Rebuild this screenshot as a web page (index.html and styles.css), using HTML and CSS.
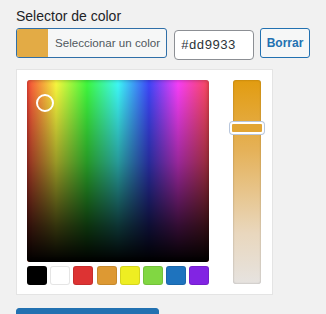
FILE: index.html
```html
<!DOCTYPE html>
<html lang="es">
<head>
  <meta charset="UTF-8">
  <title>Selector de color</title>
  <link rel="stylesheet" href="styles.css">
</head>
<body>

<div class="field">
  <label class="field-label">Selector de color</label>

  <div class="picker-row">
    <button class="color-result">
      <span class="swatch-current"></span>
      <span class="result-text">Seleccionar un color</span>
    </button>
    <input type="text" class="hex-input" value="#dd9933">
    <button class="clear-btn">Borrar</button>
  </div>

  <div class="picker-panel">
    <div class="picker-main">
      <div class="square">
        <div class="square-shade"></div>
        <span class="square-handle"></span>
      </div>
      <div class="palette">
        <span class="pal" style="background:#000000"></span>
        <span class="pal" style="background:#ffffff"></span>
        <span class="pal" style="background:#dd3333"></span>
        <span class="pal" style="background:#dd9933"></span>
        <span class="pal" style="background:#eeee22"></span>
        <span class="pal" style="background:#81d742"></span>
        <span class="pal" style="background:#1e73be"></span>
        <span class="pal" style="background:#8224e3"></span>
      </div>
    </div>
    <div class="slider">
      <span class="slider-handle"></span>
    </div>
  </div>

  <button class="save-btn" aria-label="Guardar cambios"></button>
</div>

</body>
</html>
```

FILE: styles.css
```css
body {
  margin: 0;
  background: #f1f1f1;
  font-family: "Liberation Sans", Arial, sans-serif;
  color: #1d2327;
}

.field {
  padding: 7px 16px 0 16px;
}

.field-label {
  display: block;
  font-size: 14px;
  line-height: 18px;
  margin-bottom: 3px;
}

.picker-row {
  display: flex;
  align-items: flex-start;
}

.color-result {
  display: flex;
  align-items: stretch;
  width: 151px;
  height: 30px;
  padding: 0;
  border: 1px solid #2f6fa8;
  border-radius: 3px;
  background: #f6f7f7;
  overflow: hidden;
  font-family: inherit;
  cursor: pointer;
}

.swatch-current {
  width: 31px;
  background: #e3ab45;
}

.result-text {
  flex: 1;
  font-size: 11.6px;
  color: #50575e;
  line-height: 28px;
  text-align: left;
  padding-left: 7px;
  white-space: nowrap;
}

.hex-input {
  width: 80px;
  height: 30px;
  box-sizing: border-box;
  margin: 2px 0 0 7px;
  padding: 0 6px;
  border: 1px solid #8c8f94;
  border-radius: 4px;
  background: #fff;
  font-family: "Liberation Mono", "DejaVu Sans Mono", monospace;
  font-size: 13px;
  color: #2c3338;
}

.clear-btn {
  width: 50px;
  height: 30px;
  margin-left: 6px;
  padding: 0;
  border: 1px solid #2271b1;
  border-radius: 3px;
  background: #f6f7f7;
  color: #2271b1;
  font-family: inherit;
  font-size: 12px;
  font-weight: bold;
  cursor: pointer;
}

.picker-panel {
  display: flex;
  box-sizing: border-box;
  width: 257px;
  margin-top: 9px;
  padding: 10px 0 9px 10px;
  background: #fff;
  border: 1px solid #e4e4e4;
}

.picker-main {
  display: flex;
  flex-direction: column;
  gap: 4px;
}

.square {
  position: relative;
  width: 182px;
  height: 182px;
  border-radius: 3px;
  overflow: hidden;
  background: linear-gradient(to right, #ff4a3a, #ffff40 16%, #40ff40 33%, #40ffff 50%, #4048ff 67%, #ff40ff 83%, #ff4a5a);
}

.square-shade {
  position: absolute;
  inset: 0;
  background: linear-gradient(to bottom, rgba(0, 0, 0, 0.02), rgba(0, 0, 0, 0.4) 45%, rgba(0, 0, 0, 0.8) 80%, #000 100%);
  box-shadow: inset 0 0 4px rgba(0, 0, 0, 0.35);
}

.square-handle {
  position: absolute;
  left: 9px;
  top: 14px;
  width: 14px;
  height: 14px;
  border: 2px solid #fff;
  border-radius: 50%;
}

.palette {
  display: flex;
  gap: 3.2px;
}

.pal {
  width: 20px;
  height: 19px;
  border-radius: 3px;
  box-shadow: inset 0 0 0 1px rgba(0, 0, 0, 0.1);
}

.slider {
  position: relative;
  width: 28px;
  height: 204px;
  margin-left: 24px;
  border-radius: 3px;
  background: linear-gradient(to bottom, #e29c10, #e5b25a 35%, #e9d7bd 75%, #e6e3e0);
  box-shadow: inset 0 0 2px rgba(0, 0, 0, 0.3);
}

.slider-handle {
  position: absolute;
  left: -3px;
  top: 42px;
  width: 30px;
  height: 8px;
  border: 2px solid #fff;
  border-radius: 3px;
  background: #e2a534;
  box-shadow: 0 0 0 1px #b8c6dc;
}

.save-btn {
  display: block;
  width: 143px;
  height: 30px;
  margin-top: 13px;
  border: 1px solid #2271b1;
  border-radius: 3px;
  background: #2271b1;
}
```
